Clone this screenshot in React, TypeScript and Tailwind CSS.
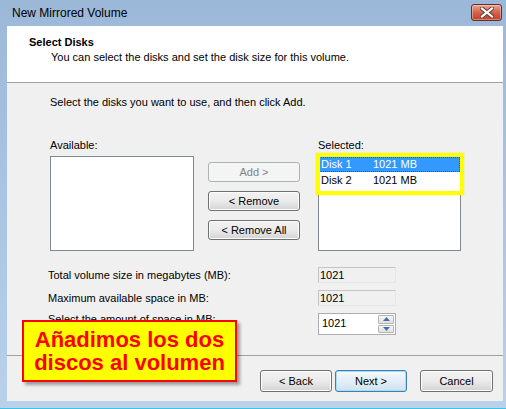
import React from 'react';

const font = { fontFamily: '"Liberation Sans", Arial, sans-serif' };

const Btn = ({ label, disabled, focused, className = '' }: { label: string; disabled?: boolean; focused?: boolean; className?: string }) => {
  const look = disabled
    ? 'border-[#adb2b5] bg-[#f4f4f4] text-[#838383]'
    : focused
      ? 'border-[#3c7fb1] bg-gradient-to-b from-[#f4f9fd] via-[#e3eef7] to-[#cfe2f0] text-black shadow-[inset_0_0_0_1px_#a8dcf5]'
      : 'border-[#707070] bg-gradient-to-b from-[#f2f2f2] via-[#ebebeb] to-[#d3d3d3] text-black shadow-[inset_0_0_0_1px_#fcfcfc]';
  return (
    <div className={`flex items-center justify-center rounded-[3px] border text-[11px] leading-[13px] ${look} ${className}`}>
      {label}
    </div>
  );
};

const CloseIcon = () => (
  <div className="flex h-[17px] w-[31px] items-center justify-center rounded-[3px] border border-[#6b2a22] bg-gradient-to-b from-[#e8a493] via-[#d2624a] to-[#c2402a] shadow-[inset_0_0_0_1px_rgba(255,255,255,0.35)]">
    <svg width="14" height="11" viewBox="0 0 14 11">
      <path d="M2 1.5 L12 9.5 M12 1.5 L2 9.5" stroke="#5a3a36" strokeWidth="4" strokeLinecap="square" />
      <path d="M2 1.5 L12 9.5 M12 1.5 L2 9.5" stroke="#ffffff" strokeWidth="2.2" strokeLinecap="square" />
    </svg>
  </div>
);

const ReadOnly = ({ value }: { value: string }) => (
  <div className="flex h-[16px] w-[78px] items-center border border-[#c4c4c4] border-b-[#e6e6e6] border-r-[#e6e6e6] bg-[#f0f0f0] pl-[1px] text-[11px] leading-[13px]">
    {value}
  </div>
);

export default function App() {
  return (
    <div className="relative flex h-[409px] w-[506px] flex-col overflow-hidden bg-gradient-to-b from-[#9cb8d9] to-[#b9d1ea] text-black" style={font}>
      {/* title bar */}
      <div className="flex h-[26px] shrink-0 items-start justify-between pl-[12px] pr-[4px]">
        <span className="mt-[6px] text-[12px] leading-[15px] text-black">New Mirrored Volume</span>
        <div className="mt-[4px]">
          <CloseIcon />
        </div>
      </div>

      {/* client area */}
      <div className="ml-[7px] mr-[3px] flex h-[375px] shrink-0 flex-col bg-[#f0f0f0]">
        {/* header */}
        <div className="h-[57px] shrink-0 border-b border-[#a0a0a0] bg-white pt-[10px]">
          <div className="pl-[22px] text-[11px] font-bold leading-[13px]">Select Disks</div>
          <div className="mt-[2px] pl-[44px] text-[11px] leading-[13px]">You can select the disks and set the disk size for this volume.</div>
        </div>

        {/* body */}
        <div className="h-[272px] shrink-0 pt-[13px]">
          <div className="pl-[43px] text-[11px] leading-[13px]">Select the disks you want to use, and then click Add.</div>

          <div className="mt-[30px] flex pl-[43px] text-[11px] leading-[13px]">
            <div className="flex w-[144px] flex-col">
              <span>Available:</span>
              <div className="mt-[4px] h-[95px] border border-[#828790] bg-white" />
            </div>

            <div className="ml-[14px] flex w-[92px] flex-col gap-[9px] pt-[23px]">
              <Btn label="Add >" disabled className="h-[20px]" />
              <Btn label="< Remove" className="h-[20px]" />
              <Btn label="< Remove All" className="h-[20px]" />
            </div>

            <div className="ml-[18px] flex w-[143px] flex-col">
              <span>Selected:</span>
              <div className="relative mt-[4px] h-[95px] border border-[#828790] bg-white">
                <div className="flex h-[15px] items-center border border-dotted border-[#1a5fb4] bg-[#3399ff] pl-[1px] text-white">
                  <span className="w-[52px]">Disk 1</span>
                  <span>1021 MB</span>
                </div>
                <div className="flex h-[17px] items-center pl-[2px]">
                  <span className="w-[52px]">Disk 2</span>
                  <span>1021 MB</span>
                </div>
                <div className="pointer-events-none absolute left-[-3px] top-[-4px] h-[42px] w-[148px] border-[4px] border-[#ffff00] shadow-[0_0_1px_#e6e600]" />
              </div>
            </div>
          </div>

          <div className="mt-[16px] flex flex-col gap-[7px] text-[11px] leading-[13px]">
            <div className="flex items-center">
              <span className="w-[311px] pl-[41px]">Total volume size in megabytes (MB):</span>
              <ReadOnly value="1021" />
            </div>
            <div className="flex items-center">
              <span className="w-[311px] pl-[41px]">Maximum available space in MB:</span>
              <ReadOnly value="1021" />
            </div>
            <div className="flex items-start">
              <span className="w-[311px] pl-[41px]">Select the amount of space in MB:</span>
              <div className="flex h-[22px] w-[78px] border border-[#abadb3] bg-white">
                <span className="flex-1 pl-[3px] pt-[3px]">1021</span>
                <div className="flex w-[17px] flex-col gap-[1px] p-[1px] pl-0">
                  <div className="flex flex-1 items-center justify-center rounded-[1px] border border-[#b5b5b5] bg-gradient-to-b from-[#f6f6f6] to-[#e0e0e0]">
                    <svg width="7" height="4" viewBox="0 0 7 4"><path d="M0 4 L3.5 0 L7 4 Z" fill="#4a6fa5" /></svg>
                  </div>
                  <div className="flex flex-1 items-center justify-center rounded-[1px] border border-[#b5b5b5] bg-gradient-to-b from-[#f6f6f6] to-[#e0e0e0]">
                    <svg width="7" height="4" viewBox="0 0 7 4"><path d="M0 0 L7 0 L3.5 4 Z" fill="#4a6fa5" /></svg>
                  </div>
                </div>
              </div>
            </div>
          </div>
        </div>

        {/* footer */}
        <div className="flex h-[46px] shrink-0 items-start justify-end border-t border-[#a0a0a0] pr-[10px] pt-[14px]">
          <Btn label="< Back" className="h-[22px] w-[72px]" />
          <Btn label="Next >" focused className="ml-[3px] h-[22px] w-[72px]" />
          <Btn label="Cancel" className="ml-[13px] h-[22px] w-[73px]" />
        </div>
      </div>

      <div className="flex-1 bg-[#b9d1ea]" />
      <div className="h-[1px] shrink-0 bg-[#3ac4e6]" />

      {/* annotation callout */}
      <div className="absolute left-[22px] top-[320px] flex h-[62px] w-[215px] flex-col items-center justify-center border-2 border-[#ff0000] bg-[#ffff00] shadow-[3px_3px_3px_rgba(0,0,0,0.35)]">
        <span className="text-[22px] font-bold leading-[23px] text-[#ff0000]">Añadimos los dos</span>
        <span className="text-[22px] font-bold leading-[23px] text-[#ff0000]">discos al volumen</span>
      </div>
    </div>
  );
}
